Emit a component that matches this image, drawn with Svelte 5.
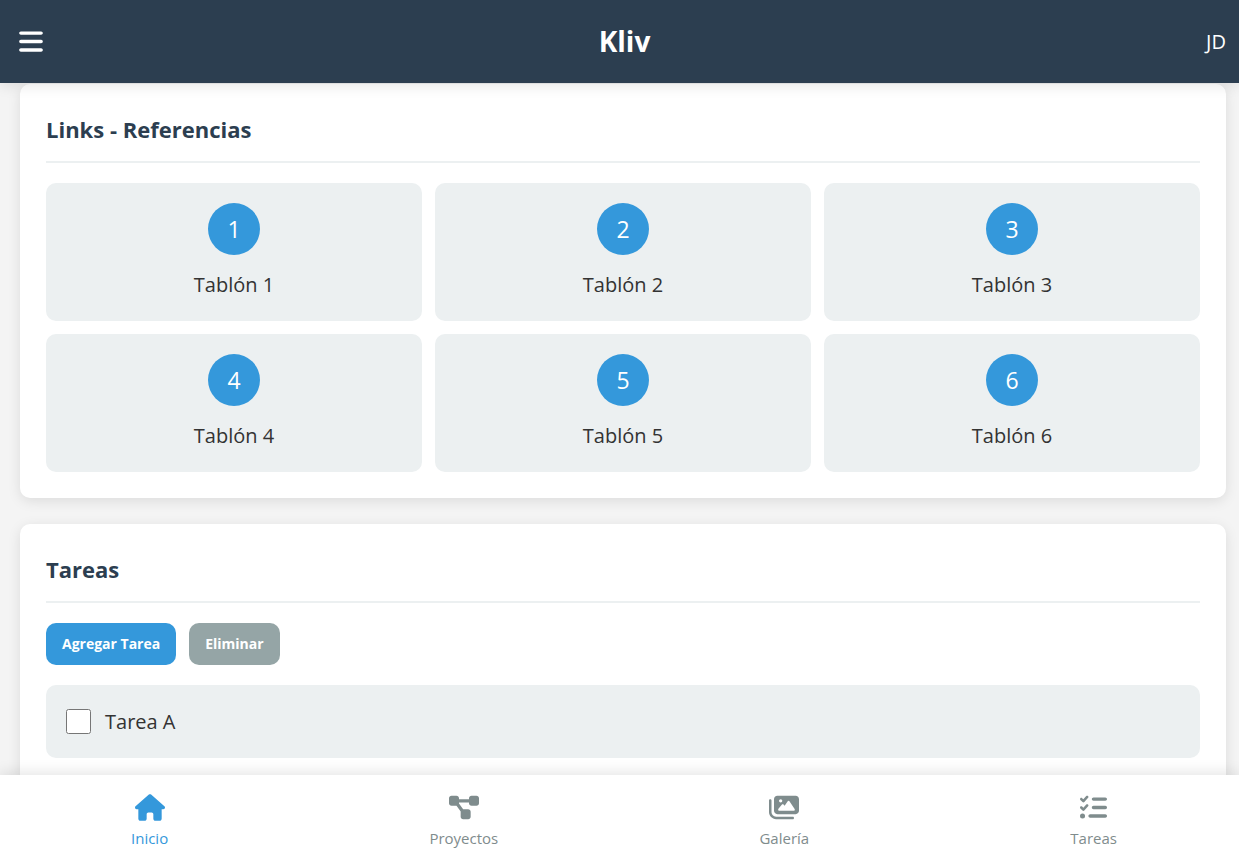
<script>
  const boards = [1, 2, 3, 4, 5, 6];
  let tasks = $state([{ id: 'a', name: 'Tarea A', done: false }]);
  let current = $state('Inicio');

  const sections = [
    {
      name: 'Inicio',
      box: '0 0 576 512',
      wide: 30,
      path: 'M575.8 255.5c0 18-15 32.1-32 32.1h-32l.7 160.2c0 2.7-.2 5.4-.5 8.1V472c0 22.1-17.9 40-40 40H456c-1.1 0-2.2 0-3.3-.1c-1.4 .1-2.8 .1-4.2 .1H416 392c-22.1 0-40-17.9-40-40V448 384c0-17.7-14.3-32-32-32H256c-17.7 0-32 14.3-32 32v64 24c0 22.1-17.9 40-40 40H160 128.1c-1.5 0-3-.1-4.5-.2c-1.2 .1-2.4 .2-3.6 .2H104c-22.1 0-40-17.9-40-40V360c0-.9 0-1.9 .1-2.8V287.6H32c-18 0-32-14-32-32.1c0-9 3-17 10-24L266.4 8c7-7 15-8 22-8s15 2 21 7L564.8 231.5c8 7 12 15 11 24z',
    },
    {
      name: 'Proyectos',
      box: '0 0 576 512',
      wide: 30,
      path: 'M0 80C0 53.5 21.5 32 48 32h96c26.5 0 48 21.5 48 48V96H384V80c0-26.5 21.5-48 48-48h96c26.5 0 48 21.5 48 48v96c0 26.5-21.5 48-48 48H432c-26.5 0-48-21.5-48-48V160H192v16c0 1.7-.1 3.4-.3 5L272 288h96c26.5 0 48 21.5 48 48v96c0 26.5-21.5 48-48 48H272c-26.5 0-48-21.5-48-48V336c0-1.7 .1-3.4 .3-5L144 224H48c-26.5 0-48-21.5-48-48V80z',
    },
    {
      name: 'Galería',
      box: '0 0 576 512',
      wide: 30,
      path: 'M160 32c-35.3 0-64 28.7-64 64V320c0 35.3 28.7 64 64 64H512c35.3 0 64-28.7 64-64V96c0-35.3-28.7-64-64-64H160zM396 138.7l96 144c4.9 7.4 5.4 16.8 1.2 24.6S480.9 320 472 320H328 280 200c-9.2 0-17.6-5.3-21.6-13.6s-2.9-18.2 2.9-25.4l64-80c4.6-5.7 11.4-9 18.7-9s14.2 3.3 18.7 9l17.3 21.6 56-84C360.5 132 368 128 376 128s15.5 4 20 10.7zM192 128a32 32 0 1 1 64 0 32 32 0 1 1 -64 0zM48 120c0-13.3-10.7-24-24-24S0 106.7 0 120V344c0 75.1 60.9 136 136 136H456c13.3 0 24-10.7 24-24s-10.7-24-24-24H136c-48.6 0-88-39.4-88-88V120z',
    },
    {
      name: 'Tareas',
      box: '0 0 512 512',
      wide: 27,
      path: 'M152.1 38.2c9.9 8.9 10.7 24 1.8 33.9l-72 80c-4.4 4.9-10.6 7.8-17.2 7.9s-12.9-2.4-17.6-7L7 113C-2.3 103.6-2.3 88.4 7 79s24.6-9.4 33.9 0l22.1 22.1 55.1-61.2c8.9-9.9 24-10.7 33.9-1.8zm0 160c9.9 8.9 10.7 24 1.8 33.9l-72 80c-4.4 4.9-10.6 7.8-17.2 7.9s-12.9-2.4-17.6-7L7 273c-9.4-9.4-9.4-24.6 0-33.9s24.6-9.4 33.9 0l22.1 22.1 55.1-61.2c8.9-9.9 24-10.7 33.9-1.8zM224 96c0-17.7 14.3-32 32-32H480c17.7 0 32 14.3 32 32s-14.3 32-32 32H256c-17.7 0-32-14.3-32-32zm0 160c0-17.7 14.3-32 32-32H480c17.7 0 32 14.3 32 32s-14.3 32-32 32H256c-17.7 0-32-14.3-32-32zM160 416c0-17.7 14.3-32 32-32H480c17.7 0 32 14.3 32 32s-14.3 32-32 32H192c-17.7 0-32-14.3-32-32zM48 368a48 48 0 1 1 0 96 48 48 0 1 1 0-96z',
    },
  ];

  function addTask() {
    tasks.push({ id: crypto.randomUUID(), name: 'Nueva tarea', done: false });
  }

  function removeDone() {
    tasks = tasks.filter((task) => !task.done);
  }
</script>

<div class="app">
  <header>
    <button class="menu" aria-label="Menú">
      <svg viewBox="0 0 448 512" width="24" height="27" aria-hidden="true">
        <path d="M0 96C0 78.3 14.3 64 32 64H416c17.7 0 32 14.3 32 32s-14.3 32-32 32H32C14.3 128 0 113.7 0 96zM0 256c0-17.7 14.3-32 32-32H416c17.7 0 32 14.3 32 32s-14.3 32-32 32H32c-17.7 0-32-14.3-32-32zM448 416c0 17.7-14.3 32-32 32H32c-17.7 0-32-14.3-32-32s14.3-32 32-32H416c17.7 0 32 14.3 32 32z" />
      </svg>
    </button>
    <h1>Kliv</h1>
    <span class="user">JD</span>
  </header>

  <main>
    <section>
      <h2>Links - Referencias</h2>
      <div class="boards">
        {#each boards as n}
          <a class="board" href="#tablon-{n}">
            <span class="badge">{n}</span>
            <span>Tablón {n}</span>
          </a>
        {/each}
      </div>
    </section>

    <section>
      <h2>Tareas</h2>
      <div class="actions">
        <button class="add" onclick={addTask}>Agregar Tarea</button>
        <button class="remove" onclick={removeDone}>Eliminar</button>
      </div>
      <ul>
        {#each tasks as task (task.id)}
          <li>
            <label>
              <input type="checkbox" bind:checked={task.done} />
              <span>{task.name}</span>
            </label>
          </li>
        {/each}
      </ul>
    </section>
  </main>

  <nav>
    {#each sections as s}
      <button class:active={current === s.name} onclick={() => (current = s.name)}>
        <svg viewBox={s.box} width={s.wide} height="27" aria-hidden="true"><path d={s.path} /></svg>
        <span>{s.name}</span>
      </button>
    {/each}
  </nav>
</div>

<style>
  :global(body) {
    margin: 0;
  }

  .app {
    height: 100vh;
    display: flex;
    flex-direction: column;
    background: #f4f4f4;
    color: #333;
    font-family: 'Segoe UI', 'Open Sans', 'Noto Sans', sans-serif;
    font-size: 20px;
    line-height: 33px;
  }

  .app * {
    box-sizing: border-box;
  }

  button {
    font-family: inherit;
    border: 0;
    margin: 0;
    cursor: pointer;
  }

  svg {
    display: block;
    fill: currentColor;
  }

  header {
    position: relative;
    z-index: 1;
    flex: none;
    display: flex;
    align-items: center;
    justify-content: space-between;
    padding: 19px 13px 20px 19px;
    background: #2c3e50;
    color: #fff;
    box-shadow: 0 3px 13px rgba(0, 0, 0, 0.1);
  }

  .menu {
    padding: 0;
    background: none;
    color: inherit;
  }

  h1 {
    margin: 0;
    font-size: 28px;
    line-height: 44px;
  }

  main {
    flex: 1;
    min-height: 0;
    overflow-y: auto;
    scrollbar-width: none;
    padding: 1px 13px 0 20px;
  }

  section {
    padding: 26px;
    margin-bottom: 26px;
    background: #fff;
    border-radius: 10px;
    box-shadow: 0 3px 13px rgba(0, 0, 0, 0.1);
  }

  h2 {
    margin: 0 0 20px;
    padding-bottom: 13px;
    border-bottom: 2px solid #ecf0f1;
    color: #2c3e50;
    font-size: 22px;
    line-height: 38px;
  }

  .boards {
    display: grid;
    grid-template-columns: repeat(3, 1fr);
    gap: 13px;
  }

  .board {
    display: flex;
    flex-direction: column;
    align-items: center;
    gap: 13px;
    padding: 20px;
    border-radius: 10px;
    background: #ecf0f1;
    color: inherit;
    text-decoration: none;
  }

  .badge {
    display: grid;
    place-items: center;
    width: 52px;
    height: 52px;
    border-radius: 50%;
    background: #3498db;
    color: #fff;
    font-size: 23px;
  }

  .actions {
    display: flex;
    gap: 13px;
    margin-bottom: 20px;
  }

  .actions button {
    padding: 10px 16px;
    border-radius: 10px;
    color: #fff;
    font-size: 14px;
    font-weight: 700;
    line-height: 22px;
  }

  .actions .add {
    background: #3498db;
  }

  .actions .remove {
    background: #95a5a6;
  }

  ul {
    display: grid;
    gap: 20px;
    margin: 0;
    padding: 0;
    list-style: none;
  }

  label {
    display: flex;
    align-items: center;
    gap: 14px;
    padding: 20px;
    border-radius: 10px;
    background: #ecf0f1;
  }

  input {
    width: 25px;
    height: 25px;
    margin: 0;
  }

  nav {
    position: relative;
    z-index: 1;
    flex: none;
    display: flex;
    justify-content: space-between;
    padding: 19px 122px 16px 131px;
    background: #fff;
    box-shadow: 0 -3px 13px rgba(0, 0, 0, 0.1);
  }

  nav button {
    display: flex;
    flex-direction: column;
    align-items: center;
    gap: 4px;
    padding: 0;
    background: none;
    color: #7f8c8d;
    font-size: 15px;
    line-height: 26px;
  }

  nav .active {
    color: #3498db;
  }
</style>
